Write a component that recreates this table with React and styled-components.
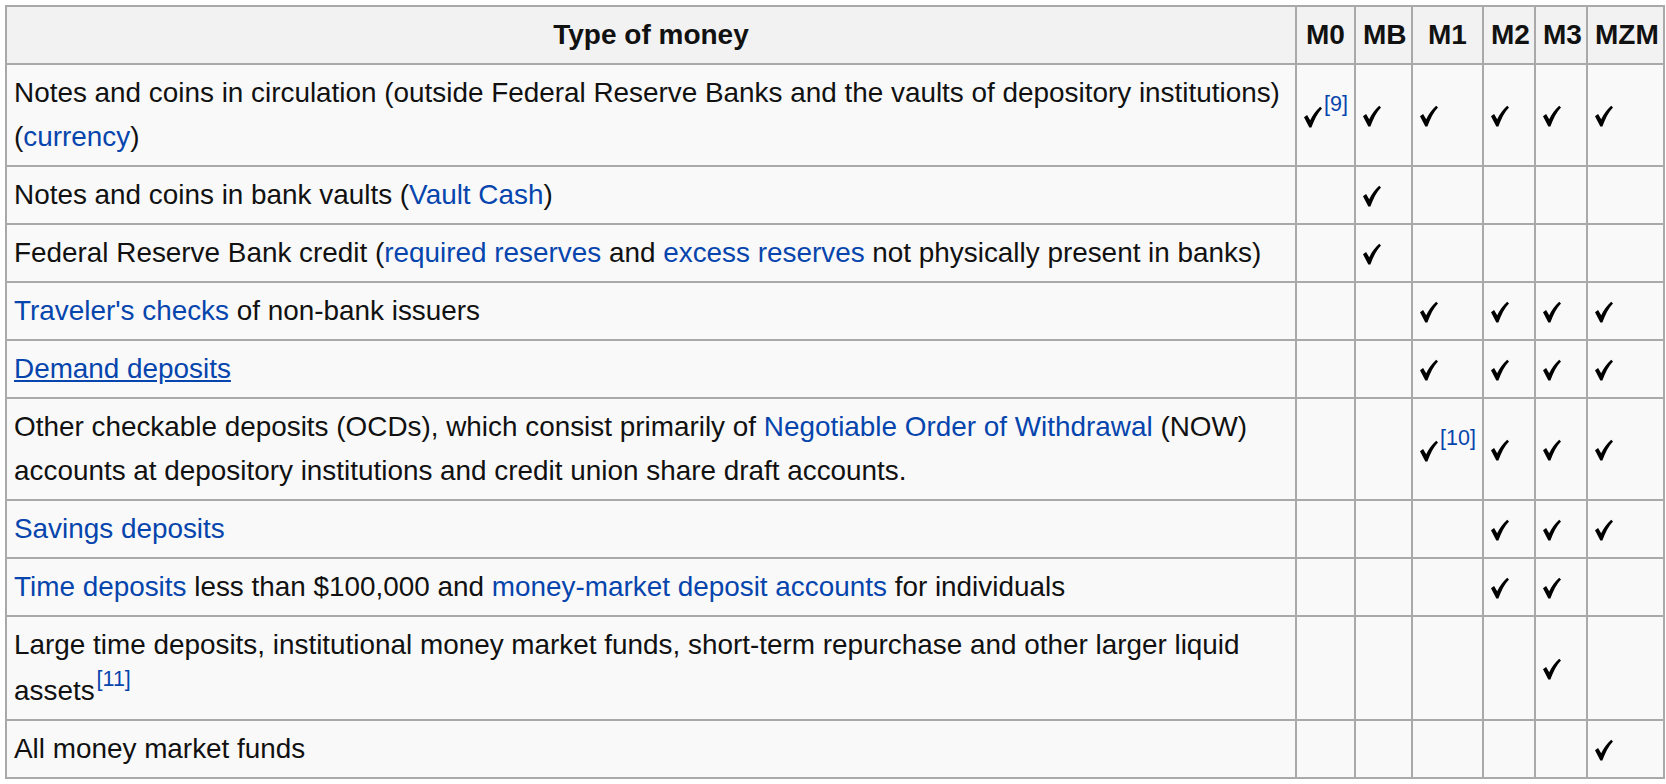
import React from "react";
import styled, { createGlobalStyle } from "styled-components";

const Global = createGlobalStyle`
  html, body { margin: 0; padding: 0; background: #ffffff; }
  body { font-family: "Liberation Sans", Arial, sans-serif; color: #111; }
`;

const Table = styled.table`
  border-collapse: collapse;
  table-layout: fixed;
  width: 1660px;
  margin: 5px 0 0 5px;
  background: #f9f9f9;
  border: 2px solid #a9a9a9;
  font-size: 28px;
  line-height: 44px;
`;

const Col = styled.col`
  width: ${(p) => p.$w}px;
`;

const Head = styled.th`
  background: #f2f2f2;
  border: 2px solid #a9a9a9;
  padding: 6px 7px;
  font-weight: bold;
  text-align: center;
  white-space: nowrap;
`;

const Cell = styled.td`
  border: 2px solid #a9a9a9;
  padding: 6px 7px;
  text-align: left;
  vertical-align: middle;
  font-size: ${(p) => (p.$mark ? "28px" : "27.88px")};
  white-space: ${(p) => (p.$mark ? "nowrap" : "normal")};
`;

const Link = styled.a`
  color: #0645ad;
  text-decoration: ${(p) => (p.$hover ? "underline" : "none")};
  cursor: pointer;
`;

const Ref = styled.sup`
  font-size: 21.5px;
  line-height: 1.2;
  vertical-align: 0.66em;
  color: #0645ad;
  margin-left: 2px;
`;

const Tick = styled.svg`
  width: 18px;
  height: 22px;
  vertical-align: -3px;
`;

const Check = () => (
  <Tick viewBox="0 0 18 22" aria-label="✓">
    <path
      d="M0 11.2 L3.1 8.9 L6.2 14.3 C8.6 9.3 12 4.4 16.2 0.8 L18 2.5 C13.6 7.1 10.2 13.6 7.4 21.6 L5.3 21.6 Z"
      fill="#000"
    />
  </Tick>
);

const COLS = [
  { key: "Type of money", w: 1290 },
  { key: "M0", w: 59 },
  { key: "MB", w: 57 },
  { key: "M1", w: 71 },
  { key: "M2", w: 52 },
  { key: "M3", w: 52 },
  { key: "MZM", w: 77 },
];

const ROWS = [
  {
    text: (
      <>
        Notes and coins in circulation (outside Federal Reserve Banks and the vaults of depository institutions) (
        <Link>currency</Link>)
      </>
    ),
    marks: { 0: "[9]", 1: true, 2: true, 3: true, 4: true, 5: true },
  },
  {
    text: (
      <>
        Notes and coins in bank vaults (<Link>Vault Cash</Link>)
      </>
    ),
    marks: { 1: true },
  },
  {
    text: (
      <>
        Federal Reserve Bank credit (<Link>required reserves</Link> and <Link>excess reserves</Link> not physically
        present in banks)
      </>
    ),
    marks: { 1: true },
  },
  {
    text: (
      <>
        <Link>Traveler's checks</Link> of non-bank issuers
      </>
    ),
    marks: { 2: true, 3: true, 4: true, 5: true },
  },
  {
    text: <Link $hover>Demand deposits</Link>,
    marks: { 2: true, 3: true, 4: true, 5: true },
  },
  {
    text: (
      <>
        Other checkable deposits (OCDs), which consist primarily of <Link>Negotiable Order of Withdrawal</Link> (NOW)
        accounts at depository institutions and credit union share draft accounts.
      </>
    ),
    marks: { 2: "[10]", 3: true, 4: true, 5: true },
  },
  {
    text: <Link>Savings deposits</Link>,
    marks: { 3: true, 4: true, 5: true },
  },
  {
    text: (
      <>
        <Link>Time deposits</Link> less than $100,000 and <Link>money-market deposit accounts</Link> for individuals
      </>
    ),
    marks: { 3: true, 4: true },
  },
  {
    text: (
      <>
        Large time deposits, institutional money market funds, short-term repurchase and other larger liquid assets
        <Ref>[11]</Ref>
      </>
    ),
    marks: { 4: true },
  },
  {
    text: <>All money market funds</>,
    marks: { 5: true },
  },
];

export default function App() {
  return (
    <>
      <Global />
      <Table>
        <colgroup>
          {COLS.map((c) => (
            <Col key={c.key} $w={c.w} />
          ))}
        </colgroup>
        <thead>
          <tr>
            {COLS.map((c) => (
              <Head key={c.key}>{c.key}</Head>
            ))}
          </tr>
        </thead>
        <tbody>
          {ROWS.map((r, i) => (
            <tr key={i}>
              <Cell>{r.text}</Cell>
              {[0, 1, 2, 3, 4, 5].map((j) => {
                const m = r.marks[j];
                return (
                  <Cell key={j} $mark>
                    {m ? <Check /> : null}
                    {typeof m === "string" ? <Ref>{m}</Ref> : null}
                  </Cell>
                );
              })}
            </tr>
          ))}
        </tbody>
      </Table>
    </>
  );
}
